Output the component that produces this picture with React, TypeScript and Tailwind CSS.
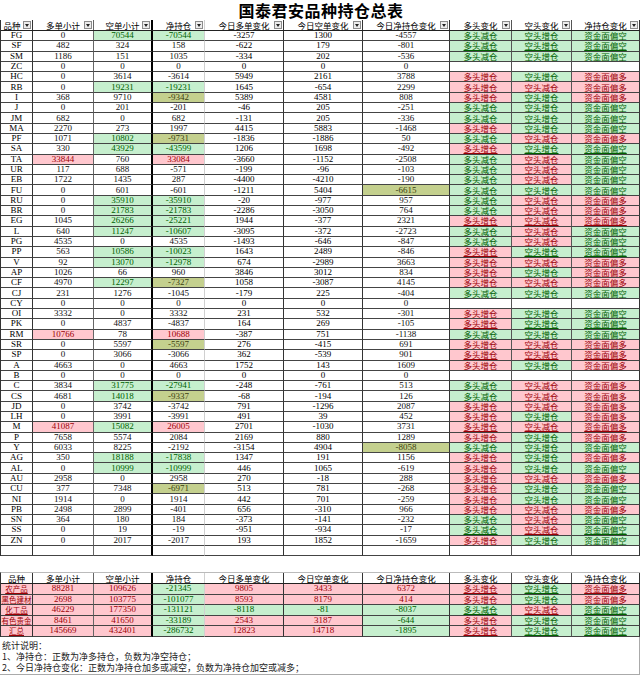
import React from "react";

type Flag = "g" | "r" | "o" | "-";
type Row = [string, number, number, number, number, number, number, string];

const rows: Row[] = [
  ["FG", 0, 70544, -70544, -3257, 1300, -4557, "-gg-"],
  ["SF", 482, 324, 158, -622, 179, -801, "----"],
  ["SM", 1186, 151, 1035, -334, 202, -536, "----"],
  ["ZC", 0, 0, 0, 0, 0, 0, "----"],
  ["HC", 0, 3614, -3614, 5949, 2161, 3788, "----"],
  ["RB", 0, 19231, -19231, 1645, -654, 2299, "-gg-"],
  ["I", 368, 9710, -9342, 5389, 4581, 808, "--o-"],
  ["J", 0, 201, -201, -46, 205, -251, "----"],
  ["JM", 682, 0, 682, -131, 205, -336, "----"],
  ["MA", 2270, 273, 1997, 4415, 5883, -1468, "----"],
  ["PF", 1071, 10802, -9731, -1836, -1886, 50, "-go-"],
  ["SA", 330, 43929, -43599, 1206, 1698, -492, "-gg-"],
  ["TA", 33844, 760, 33084, -3660, -1152, -2508, "r-r-"],
  ["UR", 117, 688, -571, -199, -96, -103, "----"],
  ["EB", 1722, 1435, 287, -4400, -4210, -190, "----"],
  ["FU", 0, 601, -601, -1211, 5404, -6615, "---o"],
  ["RU", 0, 35910, -35910, -20, -977, 957, "-gg-"],
  ["BR", 0, 21783, -21783, -2286, -3050, 764, "-gg-"],
  ["EG", 1045, 26266, -25221, 1944, -377, 2321, "-gg-"],
  ["L", 640, 11247, -10607, -3095, -372, -2723, "-gg-"],
  ["PG", 4535, 0, 4535, -1493, -646, -847, "----"],
  ["PP", 563, 10586, -10023, 1643, 2489, -846, "-gg-"],
  ["V", 92, 13070, -12978, 674, -2989, 3663, "-gg-"],
  ["AP", 1026, 66, 960, 3846, 3012, 834, "----"],
  ["CF", 4970, 12297, -7327, 1058, -3087, 4145, "-go-"],
  ["CJ", 231, 1276, -1045, -179, 225, -404, "----"],
  ["CY", 0, 0, 0, 0, 0, 0, "----"],
  ["OI", 3332, 0, 3332, 231, 532, -301, "----"],
  ["PK", 0, 4837, -4837, 164, 269, -105, "----"],
  ["RM", 10766, 78, 10688, -387, 751, -1138, "r-r-"],
  ["SR", 0, 5597, -5597, 276, -415, 691, "--o-"],
  ["SP", 0, 3066, -3066, 362, -539, 901, "----"],
  ["A", 4663, 0, 4663, 1752, 143, 1609, "----"],
  ["B", 0, 0, 0, 0, 0, 0, "----"],
  ["C", 3834, 31775, -27941, -248, -761, 513, "-gg-"],
  ["CS", 4681, 14018, -9337, -68, -194, 126, "-go-"],
  ["JD", 0, 3742, -3742, 791, -1296, 2087, "----"],
  ["LH", 0, 3991, -3991, 491, 39, 452, "----"],
  ["M", 41087, 15082, 26005, 2701, -1030, 3731, "rgr-"],
  ["P", 7658, 5574, 2084, 2169, 880, 1289, "----"],
  ["Y", 6033, 8225, -2192, -3154, 4904, -8058, "---o"],
  ["AG", 350, 18188, -17838, 1347, 191, 1156, "-gg-"],
  ["AL", 0, 10999, -10999, 446, 1065, -619, "-gg-"],
  ["AU", 2958, 0, 2958, 270, -18, 288, "----"],
  ["CU", 377, 7348, -6971, 513, 781, -268, "--o-"],
  ["NI", 1914, 0, 1914, 442, 701, -259, "----"],
  ["PB", 2498, 2899, -401, 656, -310, 966, "----"],
  ["SN", 364, 180, 184, -373, -141, -232, "----"],
  ["SS", 0, 19, -19, -951, -934, -17, "----"],
  ["ZN", 0, 2017, -2017, 193, 1852, -1659, "----"],
];

const summary: [string, number, number, number, number, number, number][] = [
  ["农产品", 88281, 109626, -21345, 9805, 3433, 6372],
  ["黑色建材", 2698, 103775, -101077, 8593, 8179, 414],
  ["化工品", 46229, 177350, -131121, -8118, -81, -8037],
  ["有色贵金", 8461, 41650, -33189, 2543, 3187, -644],
  ["汇总", 145669, 432401, -286732, 12823, 14718, -1895],
];

const headers = [
  "品种",
  "多单小计",
  "空单小计",
  "净持仓",
  "今日多单变化",
  "今日空单变化",
  "今日净持仓变化",
  "多头变化",
  "空头变化",
  "净持仓变化",
];

const fills: Record<Flag, string> = {
  g: "bg-[#c6efce] text-[#006100]",
  r: "bg-[#ffc7ce] text-[#9c0006]",
  o: "bg-[#c4d08e] text-[#3b3f10]",
  "-": "text-[#111]",
};

// right border of each column
const colBorder = [
  "border-r border-r-[#333]",
  "border-r border-r-[#666]",
  "border-r-2 border-r-black",
  "border-r border-r-[#d0d0d0]",
  "border-r border-r-[#333]",
  "border-r border-r-[#333]",
  "border-r border-r-[#333]",
  "border-r border-r-[#555]",
  "border-r border-r-[#555]",
  "border-r border-r-[#333]",
];

const grid =
  "grid grid-cols-[32px_61px_59px_52px_79px_79px_87px_62px_60px_68px]";

const cjk = { fontFamily: '"Noto Sans CJK SC", "Liberation Sans", sans-serif' };
const num = { fontFamily: '"Liberation Serif", "Noto Sans CJK SC", serif' };

function FilterButton() {
  return (
    <span className="absolute right-[1px] top-[1px] flex h-[8px] w-[8px] items-center justify-center border border-[#8c8c8c] bg-[#ececec]">
      <svg width="4" height="3" viewBox="0 0 4 3">
        <path d="M0 0h4L2 3z" fill="#222" />
      </svg>
    </span>
  );
}

function Cell({
  i,
  className = "",
  children,
  font = num,
}: {
  i: number;
  className?: string;
  children?: React.ReactNode;
  font?: React.CSSProperties;
}) {
  return (
    <div
      className={`flex items-center justify-center overflow-hidden whitespace-nowrap border-b border-b-[#444] leading-[9px] ${colBorder[i]} ${className}`}
      style={font}
    >
      {children}
    </div>
  );
}

function label(v: number, pos: [string, Flag], neg: [string, Flag]) {
  if (v > 0) return pos;
  if (v < 0) return neg;
  return null;
}

function Tag({ i, tag }: { i: number; tag: [string, Flag] | null }) {
  return (
    <Cell
      i={i}
      font={cjk}
      className={`text-[8.5px] ${tag ? fills[tag[1]] : ""}`}
    >
      {tag && <span className="underline underline-offset-1">{tag[0]}</span>}
    </Cell>
  );
}

function HeaderRow({ filter }: { filter: boolean }) {
  return (
    <div className={`${grid} h-[11px] border-b border-b-[#222]`}>
      {headers.map((h, i) => (
        <div
          key={h}
          className={`relative flex items-center justify-center whitespace-nowrap text-[8.5px] leading-[10px] text-black ${colBorder[i]}`}
          style={cjk}
        >
          <span className={filter && i === 0 ? "-ml-[9px]" : ""}>{h}</span>
          {filter && <FilterButton />}
        </div>
      ))}
    </div>
  );
}

export default function App() {
  return (
    <div className="w-[640px] h-[676px] overflow-hidden bg-white text-black">
      <div
        className="flex h-[20px] items-center justify-center pl-[2px] text-[16px] font-bold leading-[20px] tracking-[0.5px]"
        style={cjk}
      >
        国泰君安品种持仓总表
      </div>

      <div className="border-l border-l-[#333]">
        <HeaderRow filter />
        {rows.map((r) => {
          const [name, l, s, n, dl, ds, dn, f] = r;
          const fl = f.split("") as Flag[];
          return (
            <div key={name + l} className={`${grid} h-[10.3px] text-[9px]`}>
              <Cell i={0}>{name}</Cell>
              <Cell i={1} className={fills[fl[0]]}>{l}</Cell>
              <Cell i={2} className={fills[fl[1]]}>{s}</Cell>
              <Cell i={3} className={fills[fl[2]]}>{n}</Cell>
              <Cell i={4}>{dl}</Cell>
              <Cell i={5}>{ds}</Cell>
              <Cell i={6} className={fills[fl[3]]}>{dn}</Cell>
              <Tag i={7} tag={label(dl, ["多头增仓", "r"], ["多头减仓", "g"])} />
              <Tag i={8} tag={label(ds, ["空头增仓", "g"], ["空头减仓", "r"])} />
              <Tag i={9} tag={label(dn, ["资金面偏多", "r"], ["资金面偏空", "g"])} />
            </div>
          );
        })}
        <div className={`${grid} h-[10.3px]`}>
          {headers.map((h, i) => (
            <Cell key={h} i={i} />
          ))}
        </div>
      </div>

      <div className="mt-[16px] border-l border-l-[#333] border-t border-t-[#bbb]">
        <HeaderRow filter={false} />
        {summary.map((r) => {
          const [name, ...vals] = r;
          return (
            <div key={name} className={`${grid} h-[10.5px] text-[9px]`}>
              <Cell i={0} font={cjk} className={`text-[7.5px] ${fills.r}`}>
                <span className="underline underline-offset-1">{name}</span>
              </Cell>
              {vals.map((v, k) => (
                <Cell key={k} i={k + 1} className={v > 0 ? fills.r : fills.g}>
                  {v}
                </Cell>
              ))}
              <Tag i={7} tag={label(vals[3], ["多头增仓", "r"], ["多头减仓", "g"])} />
              <Tag i={8} tag={label(vals[4], ["空头增仓", "g"], ["空头减仓", "r"])} />
              <Tag i={9} tag={label(vals[5], ["资金面偏多", "r"], ["资金面偏空", "g"])} />
            </div>
          );
        })}
      </div>

      <div
        className="flex h-[38px] flex-col pl-[2px] pt-[3px] text-[9px] leading-[11px] text-[#222] border-b border-b-[#aaa] border-r border-r-[#aaa]"
        style={cjk}
      >
        <span>统计说明：</span>
        <span>1、净持仓：正数为净多持仓，负数为净空持仓；</span>
        <span>2、今日净持仓变化：正数为净持仓加多或减空，负数为净持仓加空或减多；</span>
      </div>
    </div>
  );
}
